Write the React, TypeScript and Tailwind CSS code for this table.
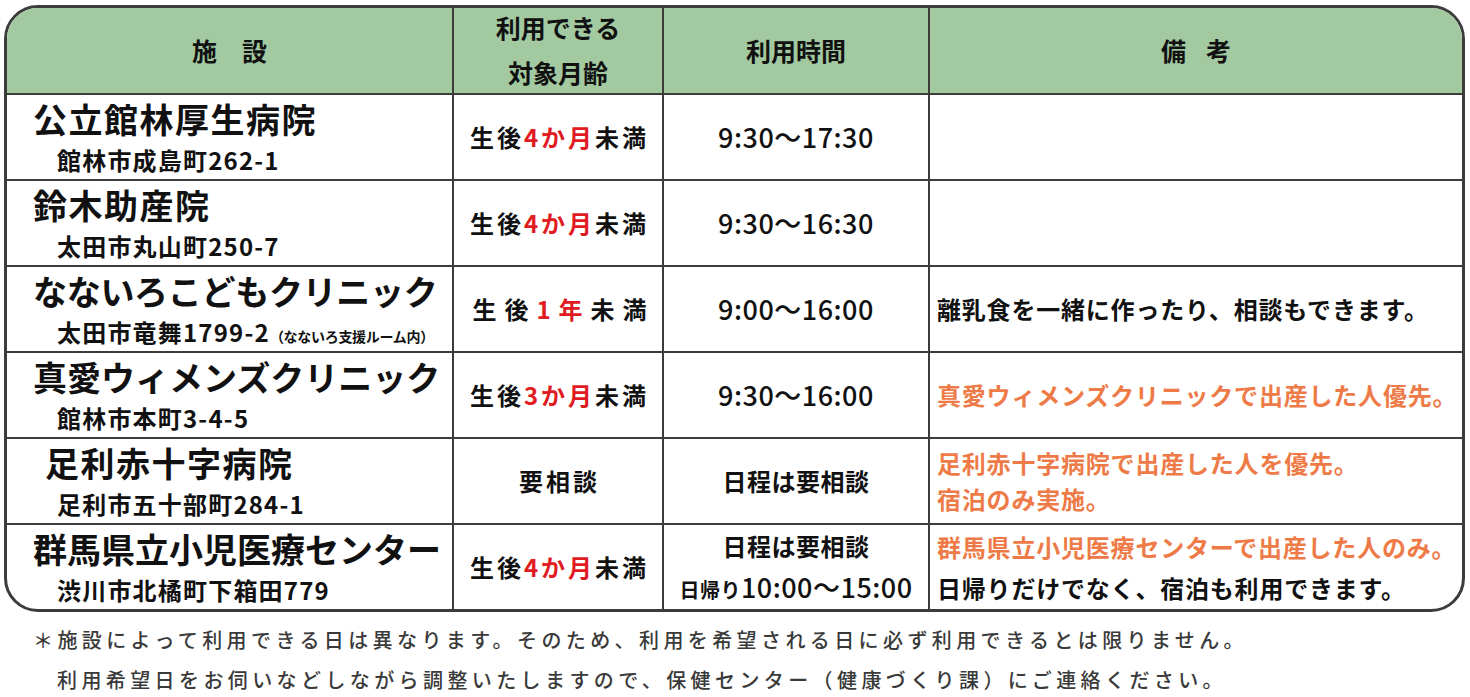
import type { ReactNode } from "react";

const FONT = { fontFamily: '"Noto Sans CJK JP", "Noto Sans", sans-serif' };

interface Row {
    name: ReactNode;
    nameClass?: string;
    address: ReactNode;
    age: ReactNode;
    time: ReactNode;
    note: ReactNode;
}

const Red = ({ children }: { children: ReactNode }) => (
    <span className="text-[#e01b22]">{children}</span>
);

const Orange = ({ children }: { children: ReactNode }) => (
    <span className="text-[#ee7b47]">{children}</span>
);

const age4 = (
    <span>
        生後<Red>4か月</Red>未満
    </span>
);

const rows: Row[] = [
    {
        name: "公立館林厚生病院",
        nameClass: "tracking-[1.5px]",
        address: "館林市成島町262-1",
        age: age4,
        time: "9:30〜17:30",
        note: null,
    },
    {
        name: "鈴木助産院",
        nameClass: "tracking-[1.5px]",
        address: "太田市丸山町250-7",
        age: age4,
        time: "9:30〜16:30",
        note: null,
    },
    {
        name: "なないろこどもクリニック",
        nameClass: "tracking-[-0.3px]",
        address: (
            <>
                太田市竜舞1799-2
                <span className="text-[14px] tracking-[-0.3px]">（なないろ支援ルーム内）</span>
            </>
        ),
        age: (
            <span className="tracking-[8px] pl-[8px]">
                生後<Red>1年</Red>未満
            </span>
        ),
        time: "9:00〜16:00",
        note: "離乳食を一緒に作ったり、相談もできます。",
    },
    {
        name: "真愛ウィメンズクリニック",
        address: "館林市本町3-4-5",
        age: (
            <span>
                生後<Red>3か月</Red>未満
            </span>
        ),
        time: "9:30〜16:00",
        note: <Orange>真愛ウィメンズクリニックで出産した人優先。</Orange>,
    },
    {
        name: "足利赤十字病院",
        nameClass: "pl-[12px] tracking-[1.5px]",
        address: "足利市五十部町284-1",
        age: "要相談",
        time: <span className="text-[24px] font-bold">日程は要相談</span>,
        note: (
            <Orange>
                足利赤十字病院で出産した人を優先。
                <br />
                宿泊のみ実施。
            </Orange>
        ),
    },
    {
        name: "群馬県立小児医療センター",
        address: "渋川市北橘町下箱田779",
        age: age4,
        time: (
            <div className="flex flex-col items-center leading-[41px]">
                <span className="text-[24px] font-bold">日程は要相談</span>
                <span className="whitespace-nowrap">
                    <span className="text-[20px] font-bold">日帰り</span>10:00〜15:00
                </span>
            </div>
        ),
        note: (
            <div className="flex flex-col leading-[41px]">
                <Orange>群馬県立小児医療センターで出産した人のみ。</Orange>
                <span>日帰りだけでなく、宿泊も利用できます。</span>
            </div>
        ),
    },
];

const App = () => {
    return (
        <div className="w-[1470px] h-[697px] bg-white text-[#111]" style={FONT}>
            <div className="ml-[4px] pt-[5px] w-[1461px]">
                <div className="grid grid-cols-[445px_210px_266px_1fr] grid-rows-[85px_repeat(6,86px)] border-[3px] border-[#3c3c3c] rounded-[34px] overflow-hidden">
                    {/* header */}
                    <div className="bg-[#a3c9a1] flex items-center justify-center text-[25px] font-bold tracking-[25px] pl-[25px]">
                        施設
                    </div>
                    <div className="bg-[#a3c9a1] border-l-2 border-[#3c3c3c] flex flex-col items-center justify-center text-[25px] font-bold leading-[45px] pb-[2px]">
                        <span>利用できる</span>
                        <span>対象月齢</span>
                    </div>
                    <div className="bg-[#a3c9a1] border-l-2 border-[#3c3c3c] flex items-center justify-center text-[25px] font-bold">
                        利用時間
                    </div>
                    <div className="bg-[#a3c9a1] border-l-2 border-[#3c3c3c] flex items-center justify-center text-[25px] font-bold tracking-[20px] pl-[20px]">
                        備考
                    </div>

                    {rows.map((row, i) => (
                        <div key={i} className="contents">
                            <div className="border-t-2 border-[#3c3c3c] pl-[26px] pt-[4px] flex flex-col">
                                <span className={`text-[34px] font-bold leading-[40px] whitespace-nowrap ${row.nameClass ?? ""}`}>
                                    {row.name}
                                </span>
                                <span className="text-[24px] font-bold leading-[30px] mt-[6px] pl-[24px] tracking-[1.2px] whitespace-nowrap">
                                    {row.address}
                                </span>
                            </div>
                            <div className="border-t-2 border-l-2 border-[#3c3c3c] flex items-center justify-center text-[24px] font-bold tracking-[3px] pl-[3px] whitespace-nowrap">
                                {row.age}
                            </div>
                            <div className="border-t-2 border-l-2 border-[#3c3c3c] flex items-center justify-center text-[27px] font-medium tracking-[0.5px] whitespace-nowrap">
                                {row.time}
                            </div>
                            <div className="border-t-2 border-l-2 border-[#3c3c3c] flex items-center pl-[7px] text-[24px] font-bold tracking-[0.8px] leading-[36px] whitespace-nowrap">
                                {row.note}
                            </div>
                        </div>
                    ))}
                </div>
            </div>

            {/* footnote */}
            <div className="mt-[8px] pl-[33px] text-[20px] font-medium text-[#3a3a3a] tracking-[4.4px] leading-[40px]">
                <p>＊施設によって利用できる日は異なります。そのため、利用を希望される日に必ず利用できるとは限りません。</p>
                <p className="pl-[24px]">利用希望日をお伺いなどしながら調整いたしますので、保健センター（健康づくり課）にご連絡ください。</p>
            </div>
        </div>
    );
};

export default App;
